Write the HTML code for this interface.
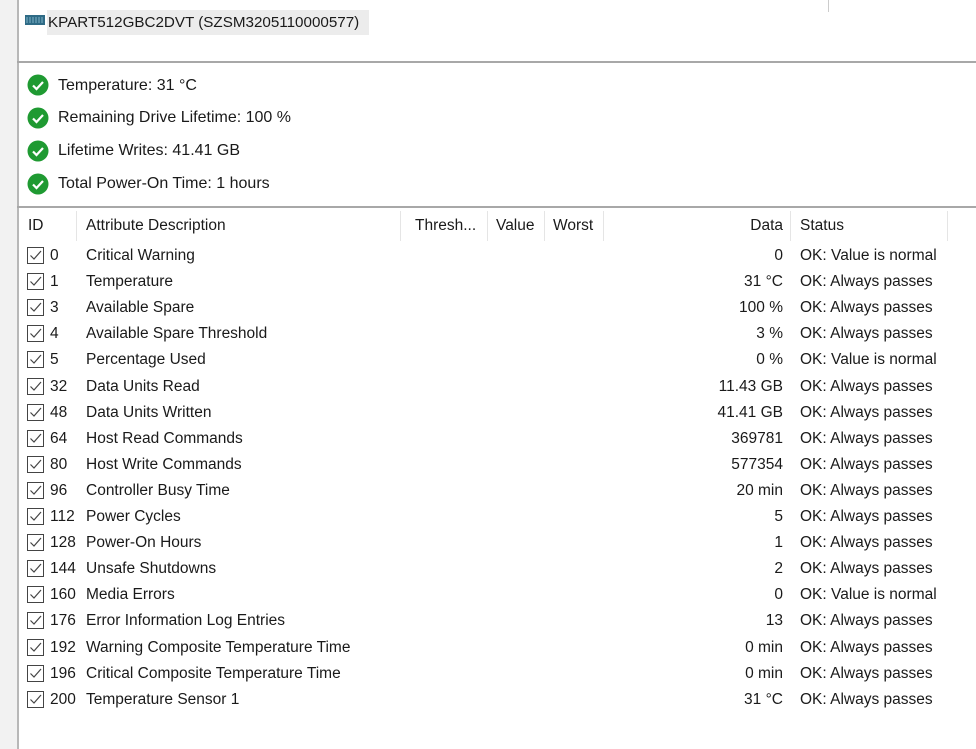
<!DOCTYPE html>
<html><head><meta charset="utf-8"><style>
*{margin:0;padding:0;box-sizing:border-box}
body{width:976px;height:749px;overflow:hidden;background:#fff;font-family:"Liberation Sans",sans-serif;font-size:15.5px;color:#1a1a1a;position:relative}
.a{position:absolute;white-space:nowrap}
.ln{position:absolute;background:#a0a0a0}
.r{position:absolute;left:0;width:976px;height:26px;line-height:26px}
.r span{position:absolute;white-space:nowrap}
.cb{position:absolute;left:27px;top:4px;width:17px;height:17px;border:1px solid #444}
.sep{position:absolute;top:211px;width:1px;height:30px;background:#e5e5e5}
</style></head><body>
<div class="a" style="left:0;top:0;width:17px;height:749px;background:#f2f2f2"></div>
<div class="ln" style="left:17px;top:0;width:2px;height:749px;background:#b8b8b8"></div>
<div class="ln" style="left:17px;top:61px;width:959px;height:2px;background:#a8a8a8"></div>
<div class="a" style="left:828px;top:0;width:1px;height:12px;background:#ccc"></div>
<div class="a" style="left:47px;top:10px;width:322px;height:25px;background:#ececec"></div>
<svg class="a" style="left:25px;top:14px" width="20" height="12"><rect x="0" y="1" width="20" height="10" fill="#2f6b86"/><path d="M2 3v6M5 3v6M8 3v6M11 3v6M14 3v6M17 3v6" stroke="#7fb3c8" stroke-width="1"/></svg>
<div class="a" style="left:48px;top:12px;font-size:15.2px;line-height:22px">KPART512GBC2DVT (SZSM3205110000577)</div>

<svg class="a" style="left:27px;top:74px" width="22" height="22"><circle cx="11" cy="11" r="10.5" fill="#1f9a32"/><path d="M6 11.5l3.5 3.5 6.5-7" stroke="#fff" stroke-width="2.2" fill="none"/></svg>
<div class="a" style="left:58px;top:75px;font-size:16px;line-height:22px">Temperature: 31 °C</div>
<svg class="a" style="left:27px;top:107px" width="22" height="22"><circle cx="11" cy="11" r="10.5" fill="#1f9a32"/><path d="M6 11.5l3.5 3.5 6.5-7" stroke="#fff" stroke-width="2.2" fill="none"/></svg>
<div class="a" style="left:58px;top:107px;font-size:16px;line-height:22px">Remaining Drive Lifetime: 100 %</div>
<svg class="a" style="left:27px;top:140px" width="22" height="22"><circle cx="11" cy="11" r="10.5" fill="#1f9a32"/><path d="M6 11.5l3.5 3.5 6.5-7" stroke="#fff" stroke-width="2.2" fill="none"/></svg>
<div class="a" style="left:58px;top:140px;font-size:16px;line-height:22px">Lifetime Writes: 41.41 GB</div>
<svg class="a" style="left:27px;top:173px" width="22" height="22"><circle cx="11" cy="11" r="10.5" fill="#1f9a32"/><path d="M6 11.5l3.5 3.5 6.5-7" stroke="#fff" stroke-width="2.2" fill="none"/></svg>
<div class="a" style="left:58px;top:173px;font-size:16px;line-height:22px">Total Power-On Time: 1 hours</div>

<div class="ln" style="left:17px;top:206px;width:959px;height:2px;background:#a8a8a8"></div>
<div class="sep" style="left:76px"></div><div class="sep" style="left:400px"></div><div class="sep" style="left:487px"></div><div class="sep" style="left:544px"></div><div class="sep" style="left:603px"></div><div class="sep" style="left:790px"></div><div class="sep" style="left:947px"></div>
<div class="r" style="top:213px"><span style="left:28px">ID</span><span style="left:86px">Attribute Description</span><span style="left:415px">Thresh...</span><span style="left:496px">Value</span><span style="left:553px">Worst</span><span style="right:193px">Data</span><span style="left:800px">Status</span></div>

<div id="rows"></div>
<script>
var d=[["0","Critical Warning","0","OK: Value is normal"],["1","Temperature","31 °C","OK: Always passes"],["3","Available Spare","100 %","OK: Always passes"],["4","Available Spare Threshold","3 %","OK: Always passes"],["5","Percentage Used","0 %","OK: Value is normal"],["32","Data Units Read","11.43 GB","OK: Always passes"],["48","Data Units Written","41.41 GB","OK: Always passes"],["64","Host Read Commands","369781","OK: Always passes"],["80","Host Write Commands","577354","OK: Always passes"],["96","Controller Busy Time","20 min","OK: Always passes"],["112","Power Cycles","5","OK: Always passes"],["128","Power-On Hours","1","OK: Always passes"],["144","Unsafe Shutdowns","2","OK: Always passes"],["160","Media Errors","0","OK: Value is normal"],["176","Error Information Log Entries","13","OK: Always passes"],["192","Warning Composite Temperature Time","0 min","OK: Always passes"],["196","Critical Composite Temperature Time","0 min","OK: Always passes"],["200","Temperature Sensor 1","31 °C","OK: Always passes"]];
var h="";d.forEach(function(r,i){var t=243+i*26.1;
h+='<div class="r" style="top:'+t+'px"><div class="cb"><svg width="15" height="15" style="position:absolute;left:0;top:0"><path d="M2.5 7.5l3.5 3.5 7-8" stroke="#444" stroke-width="1.2" fill="none"/></svg></div><span style="left:50px">'+r[0]+'</span><span style="left:86px">'+r[1]+'</span><span style="right:193px">'+r[2]+'</span><span style="left:800px">'+r[3]+'</span></div>';});
document.getElementById("rows").innerHTML=h;
</script>
</body></html>
